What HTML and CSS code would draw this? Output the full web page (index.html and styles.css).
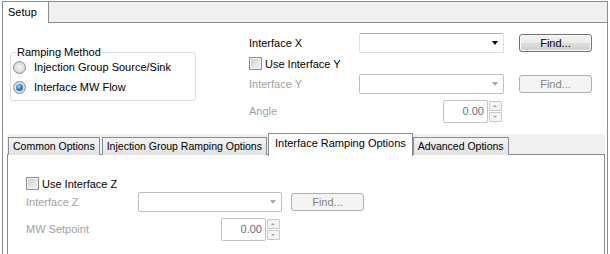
FILE: index.html
```html
<!DOCTYPE html>
<html>
  <head>
    <meta charset="utf-8">
    <title>Setup</title>
    <link rel="stylesheet" href="styles.css">
  </head>
  <body>
    <div class="frame">
      <!-- top tabs -->
      <div class="strip">
        <div class="tab-main">Setup</div>
      </div>
      <!-- setup page -->
      <div class="setup">
        <fieldset class="group">
          <legend>Ramping Method</legend>
          <label class="opt"><span class="radio"></span>Injection Group Source/Sink</label>
          <label class="opt"><span class="radio on"></span>Interface MW Flow</label>
        </fieldset>
        <div class="fields">
          <span class="lbl">Interface X</span>
          <div class="combo"><span class="arrow"></span></div>
          <button class="btn">Find...</button>

          <label class="chk span3"><span class="box"></span>Use Interface Y</label>

          <span class="lbl off">Interface Y</span>
          <div class="combo dis"><span class="arrow"></span></div>
          <button class="btn dis">Find...</button>

          <span class="lbl off angle">Angle</span>
          <div class="spin angle">
            <div class="num">0.00</div>
            <div class="spin-btns"><span class="up"></span><span class="down"></span></div>
          </div>
        </div>
      </div>
      <!-- sub tabs -->
      <div class="sub">
        <div class="sub-strip">
          <div class="tab first">Common Options</div>
          <div class="tab">Injection Group Ramping Options</div>
          <div class="tab sel">Interface Ramping Options</div>
          <div class="tab last">Advanced Options</div>
        </div>
        <div class="sub-page">
          <div class="fields low">
            <label class="chk span3"><span class="box"></span>Use Interface Z</label>

            <span class="lbl off">Interface Z</span>
            <div class="combo dis"><span class="arrow"></span></div>
            <button class="btn dis">Find...</button>

            <span class="lbl off angle">MW Setpoint</span>
            <div class="spin angle">
              <div class="num">0.00</div>
              <div class="spin-btns"><span class="up"></span><span class="down"></span></div>
            </div>
          </div>
        </div>
      </div>
    </div>
  </body>
</html>
```

FILE: styles.css
```css
/* base */

body {
  margin: 0;
  background: #fff;
  font-family: "Liberation Sans", Arial, sans-serif;
  font-size: 10.5px;
  color: #000;
  overflow: hidden;
}

/* outer frame */

.frame {
  margin: 1px 2px 0 2px;
  height: 253px;
  box-sizing: border-box;
  border: 1px solid #898c95;
  border-bottom: 0;
}
.strip {
  display: flex;
  height: 20px;
  background: #f0f0f0;
  border-bottom: 1px solid #898c95;
}
.tab-main {
  width: 40px;
  height: 21px;
  padding-left: 5px;
  line-height: 20px;
  font-size: 11px;
  background: #fff;
  border-right: 1px solid #898c95;
}

/* setup page */

.setup {
  display: flex;
  align-items: flex-start;
  height: 111px;
  box-sizing: border-box;
  padding: 10px 0 0 7px;
}
.group {
  width: 182px;
  margin: 13px 0 0 0;
  padding: 0 0 3px 2px;
  border: 1px solid #d5dfe5;
  border-radius: 3px;
  box-sizing: content-box;
}
.group legend {
  padding: 0 1px;
  margin-left: 3px;
  line-height: 13px;
  font-size: 11px;
}
.opt {
  display: flex;
  align-items: center;
  height: 20px;
  font-size: 11px;
}
.opt:first-of-type {
  margin-top: -2px;
}
.radio {
  width: 11px;
  height: 11px;
  margin-right: 8px;
  border: 1px solid #8e8f8f;
  border-radius: 50%;
  background: radial-gradient(circle at 50% 50%, #f4f4f4 0, #dcdcdc 60%, #c9c9c9 100%);
  position: relative;
}
.radio.on::after {
  content: "";
  position: absolute;
  left: 2px;
  top: 2px;
  width: 7px;
  height: 7px;
  border-radius: 50%;
  background: radial-gradient(circle at 40% 35%, #9fd7f7 0, #2f8ad2 45%, #0c3e7c 100%);
}

/* field grid */

.fields {
  display: grid;
  grid-template-columns: 110px 145px 88px;
  row-gap: 4px;
  margin-left: 53px;
  align-items: center;
  font-size: 11px;
}
.span3 {
  grid-column: 1 / 4;
}
.lbl {
  line-height: 13px;
}
.off {
  color: #a0a0a0;
}
.angle {
  margin-top: 2px;
}

.chk {
  display: flex;
  align-items: center;
  height: 13px;
}
.box {
  width: 11px;
  height: 11px;
  margin-right: 3px;
  border: 1px solid #8e8f8f;
  background: linear-gradient(135deg, #cbcbcb 0, #e6e6e6 60%, #f4f4f4 100%);
  box-shadow: inset 0 0 0 1px #f4f4f4;
}

.combo {
  height: 18px;
  border: 1px solid #dbdfe6;
  border-top-color: #abadb3;
  border-radius: 2px;
  position: relative;
  background: #fff;
}
.combo.dis {
  border-color: #bfbfbf;
}
.arrow {
  position: absolute;
  right: 5px;
  top: 7px;
  border-left: 3px solid transparent;
  border-right: 3px solid transparent;
  border-top: 4px solid #000;
}
.combo.dis .arrow {
  border-top-color: #a6a6a6;
}

.btn {
  width: 73px;
  height: 18px;
  margin: 0 0 0 15px;
  padding: 0;
  font: inherit;
  color: #000;
  border: 1px solid #707070;
  border-radius: 3px;
  background: linear-gradient(#f2f2f2 0, #ebebeb 50%, #dddddd 50%, #cfcfcf 100%);
  box-shadow: inset 0 0 0 1px #fcfcfc;
}
.btn.dis {
  color: #838383;
  border-color: #adb2b5;
  background: #f4f4f4;
  box-shadow: none;
}

/* spin box */

.spin {
  grid-column: 2;
  justify-self: end;
  display: flex;
  align-items: center;
  margin-right: 2px;
}
.num {
  width: 40px;
  height: 21px;
  padding-right: 3px;
  line-height: 21px;
  text-align: right;
  color: #6d6d80;
  border: 1px solid #c2c2c2;
  border-radius: 2px;
}
.spin-btns {
  display: flex;
  flex-direction: column;
  gap: 1px;
  margin-left: 1px;
}
.spin-btns span {
  width: 11px;
  height: 8px;
  border: 1px solid #c9c9c9;
  border-radius: 1px;
  background: #f4f4f4;
  position: relative;
}
.spin-btns span::after {
  content: "";
  position: absolute;
  left: 3px;
  border-left: 2px solid transparent;
  border-right: 2px solid transparent;
}
.spin-btns .up::after {
  top: 3px;
  border-bottom: 2px solid #a0a0a0;
}
.spin-btns .down::after {
  top: 3px;
  border-top: 2px solid #a0a0a0;
}

/* sub tabs */

.sub {
  margin: 0 2px 0 4px;
}
.sub-strip {
  display: flex;
  align-items: flex-end;
  height: 20px;
  background: #f0f0f0;
  border-bottom: 1px solid #898c95;
  padding-left: 1px;
}
.tab {
  height: 17px;
  padding: 0 4px;
  line-height: 17px;
  margin: 0 2px -1px 0;
  border: 1px solid #898c95;
  border-bottom: 0;
  background: linear-gradient(#f2f2f2, #e3e3e3);
}
.tab.sel {
  height: 22px;
  line-height: 19px;
  margin: 0 0 -2px -1px;
  padding: 0 6px;
  background: #fff;
  font-size: 11px;
}
.sub-page {
  height: 99px;
  box-sizing: border-box;
  border-left: 1px solid #898c95;
  border-right: 1px solid #898c95;
  padding: 22px 0 0 18px;
}
.fields.low {
  margin-left: 0;
  grid-template-columns: 112px 144px 82px;
  row-gap: 2px;
}
.fields.low .btn {
  margin-left: 9px;
}
.fields.low .angle {
  margin-top: 4px;
}
```
